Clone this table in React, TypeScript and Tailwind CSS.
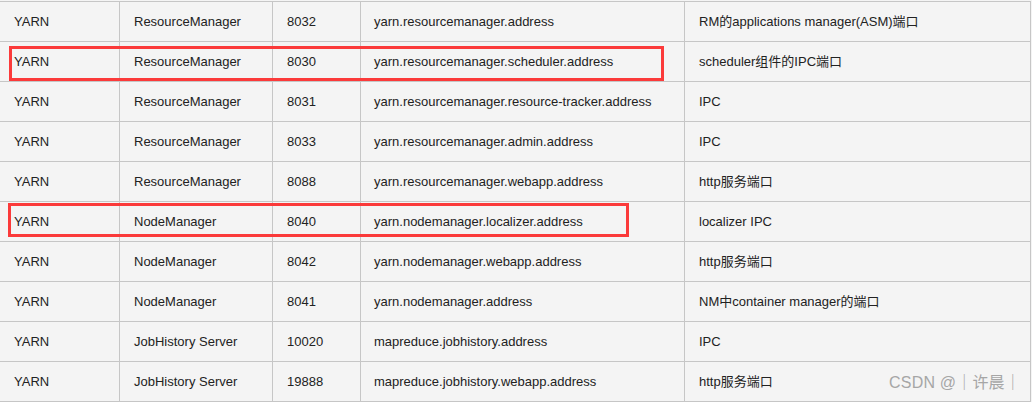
import React from "react";

const rows: [string, string, string, string, string][] = [
  ["YARN", "ResourceManager", "8032", "yarn.resourcemanager.address", "RM的applications manager(ASM)端口"],
  ["YARN", "ResourceManager", "8030", "yarn.resourcemanager.scheduler.address", "scheduler组件的IPC端口"],
  ["YARN", "ResourceManager", "8031", "yarn.resourcemanager.resource-tracker.address", "IPC"],
  ["YARN", "ResourceManager", "8033", "yarn.resourcemanager.admin.address", "IPC"],
  ["YARN", "ResourceManager", "8088", "yarn.resourcemanager.webapp.address", "http服务端口"],
  ["YARN", "NodeManager", "8040", "yarn.nodemanager.localizer.address", "localizer IPC"],
  ["YARN", "NodeManager", "8042", "yarn.nodemanager.webapp.address", "http服务端口"],
  ["YARN", "NodeManager", "8041", "yarn.nodemanager.address", "NM中container manager的端口"],
  ["YARN", "JobHistory Server", "10020", "mapreduce.jobhistory.address", "IPC"],
  ["YARN", "JobHistory Server", "19888", "mapreduce.jobhistory.webapp.address", "http服务端口"],
];

const widths = [
  "w-[120px] pl-[14px]",
  "w-[153px] pl-[14px]",
  "w-[88px] pl-[14px]",
  "w-[324px] pl-[13px]",
  "w-[346px] pl-[14px]",
];

export default function App() {
  return (
    <div
      className="relative w-[1032px] h-[402px] bg-[#f4f4f4] overflow-hidden pt-px text-[13px] text-[#222]"
      style={{ fontFamily: '"Liberation Sans", Arial, "Noto Sans CJK SC", sans-serif' }}
    >
      <div className="flex flex-col border-t border-[#c6c6c6] w-[1031px]">
        {rows.map((r, i) => (
          <div key={i} className="flex h-[40px] border-b border-[#c6c6c6]">
            {r.map((c, j) => (
              <div
                key={j}
                className={`${widths[j]} shrink-0 border-r border-[#c6c6c6] flex items-center whitespace-nowrap`}
              >
                {c}
              </div>
            ))}
          </div>
        ))}
      </div>
      <div className="absolute left-[9px] top-[46px] w-[655px] h-[35px] border-[3px] border-[#fb3a3a]" />
      <div className="absolute left-[8px] top-[203px] w-[621px] h-[34px] border-[3px] border-[#fb3a3a]" />
      <div className="absolute left-[889px] top-[373px] text-[16px] leading-[20px] text-[#a6a6a6] whitespace-nowrap tracking-[0.2px]">
        CSDN @｜许晨｜
      </div>
    </div>
  );
}
